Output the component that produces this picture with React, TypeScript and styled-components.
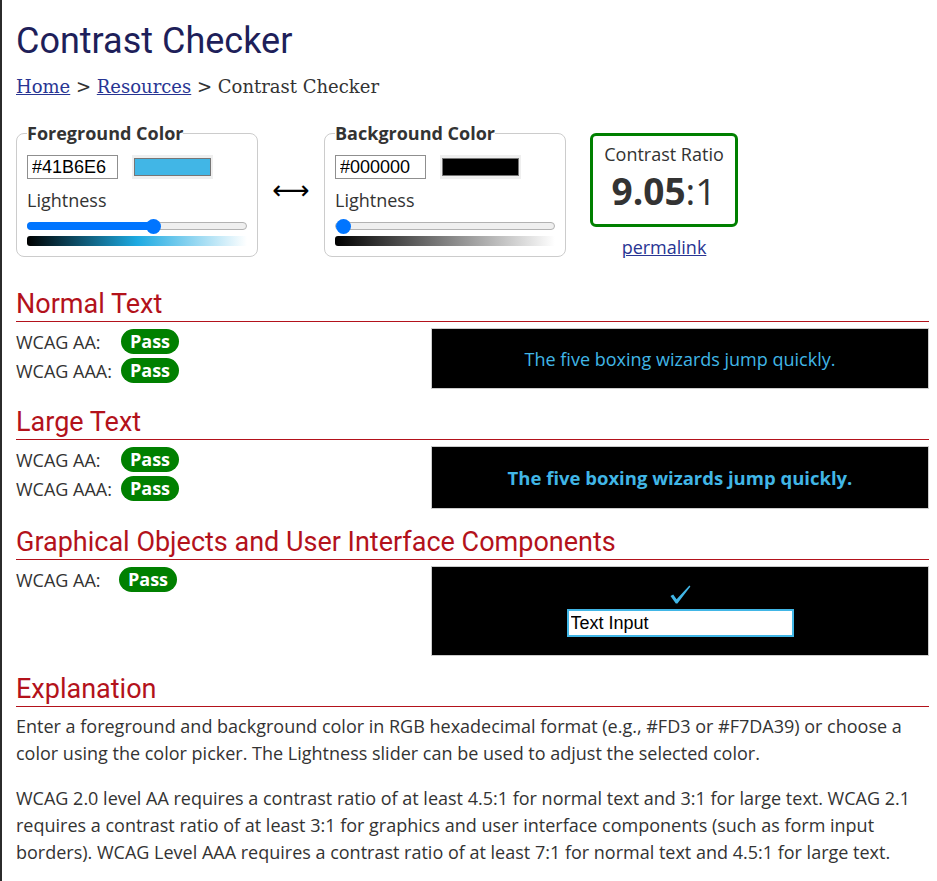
import styled, { createGlobalStyle } from "styled-components";

const GlobalStyle = createGlobalStyle`
  html {
    border-left: 2px solid #2b2b2b;
  }

  body {
    margin: 0;
    background: #fff;
    color: #333;
    font-family: "Open Sans", sans-serif;
    font-size: 18px;
  }
`;

const Page = styled.main`
  padding: 0 8px 40px 14px;
`;

const Title = styled.h1`
  margin: 20px 0 0;
  font-family: Roboto, sans-serif;
  font-weight: 400;
  font-size: 36px;
  line-height: 43px;
  color: #1e1f5a;
`;

const Crumbs = styled.nav`
  margin-top: 13px;
  font-family: "DejaVu Serif", serif;
  font-size: 18px;
  color: #333;

  a {
    color: #283593;
    text-decoration: underline;
  }
`;

const Controls = styled.div`
  display: flex;
  align-items: flex-start;
  margin-top: 24px;
  margin-bottom: 28px;
`;

const ColorSet = styled.fieldset`
  box-sizing: border-box;
  width: 242px;
  min-width: 0;
  margin: 0;
  padding: 10px;
  border: 1px solid #ccc;
  border-radius: 8px;

  legend {
    padding: 0;
    font-weight: 700;
    font-size: 18px;
    line-height: 24px;
    color: #333;
  }
`;

const InputRow = styled.div`
  display: flex;
  gap: 14px;
`;

const HexInput = styled.input`
  box-sizing: border-box;
  width: 91px;
  height: 24px;
  margin: 0;
  padding: 0 4px;
  border: 1px solid #8f8f8f;
  font-family: "Liberation Sans", Arial, sans-serif;
  font-size: 18px;
  color: #000;
`;

const Swatch = styled.div<{ $color: string }>`
  box-sizing: border-box;
  width: 81px;
  height: 24px;
  padding: 3px 2px;
  background: #efefef;

  span {
    display: block;
    height: 100%;
    box-sizing: border-box;
    border: 1px solid #767676;
    background: ${(p) => p.$color};
  }
`;

const Label = styled.div`
  margin-top: 9px;
  font-size: 18px;
  line-height: 24px;
`;

const Track = styled.div`
  position: relative;
  box-sizing: border-box;
  height: 8px;
  margin: 10px 0 6px;
  border: 1px solid #b2b2b2;
  border-radius: 4px;
  background: #efefef;
`;

const Fill = styled.div`
  position: absolute;
  top: -1px;
  bottom: -1px;
  left: -1px;
  border-radius: 4px;
  background: #0075ff;
`;

const Thumb = styled.div`
  position: absolute;
  top: 50%;
  width: 15px;
  height: 15px;
  margin: -7.5px 0 0 -7.5px;
  border-radius: 50%;
  background: #0075ff;
`;

const Gradient = styled.div<{ $mid: string }>`
  height: 10px;
  border-radius: 3px 0 0 3px;
  background: linear-gradient(to right, #000, ${(p) => p.$mid}, #fff);
`;

const Arrow = styled.div`
  width: 66px;
  align-self: center;
  text-align: center;
  font-family: "DejaVu Sans", sans-serif;
  font-size: 26px;
  color: #000;
`;

const RatioCol = styled.div`
  display: flex;
  flex-direction: column;
  align-items: center;
  margin: 12px 0 0 24px;

  a {
    margin-top: 8px;
    font-size: 18px;
    line-height: 24px;
    color: #283593;
  }
`;

const RatioBox = styled.div`
  box-sizing: border-box;
  width: 148px;
  height: 94px;
  padding: 7px 0;
  border: 3px solid #008000;
  border-radius: 6px;
  text-align: center;
  font-size: 18px;
  line-height: 23px;

  strong {
    display: block;
    font-size: 37px;
    line-height: 50px;
    font-weight: 700;
  }

  strong span {
    font-weight: 400;
  }
`;

const Heading = styled.h2`
  margin: 16px 0 0;
  border-bottom: 1px solid #b3121b;
  font-family: Roboto, sans-serif;
  font-weight: 400;
  font-size: 27px;
  line-height: 34px;
  color: #b3121b;
`;

const SectionBody = styled.div`
  display: grid;
  grid-template-columns: 415px 1fr;
  padding-top: 6px;
`;

const Results = styled.div<{ $labelWidth: number }>`
  display: grid;
  grid-template-columns: ${(p) => p.$labelWidth}px auto;
  justify-content: start;
  align-items: center;
  row-gap: 4px;
  padding-top: 1px;
  align-self: start;
  font-size: 18px;
  line-height: 24px;
`;

const Pill = styled.span`
  display: inline-block;
  box-sizing: border-box;
  height: 25px;
  padding: 0 9px;
  border-radius: 13px;
  background: #008000;
  color: #fff;
  font-weight: 700;
  font-size: 18px;
  line-height: 25px;
  vertical-align: top;
`;

const Sample = styled.div<{ $height: number; $bold?: boolean }>`
  box-sizing: border-box;
  height: ${(p) => p.$height}px;
  display: flex;
  flex-direction: column;
  align-items: center;
  justify-content: center;
  gap: 4px;
  border: 1px solid #ccc;
  background: #000;
  color: #41b6e6;
  font-size: ${(p) => (p.$bold ? 18.5 : 18)}px;
  font-weight: ${(p) => (p.$bold ? 700 : 400)};
`;

const DemoInput = styled.input`
  box-sizing: border-box;
  width: 227px;
  height: 28px;
  margin: 0;
  padding: 0 2px;
  border: 2px solid #41b6e6;
  background: #fff;
  font-family: "Liberation Sans", Arial, sans-serif;
  font-size: 18px;
  color: #000;
  outline: none;
`;

const Para = styled.p`
  margin: 6px 0 18px;
  font-size: 18px;
  line-height: 27px;
  color: #333;

  & + & {
    margin-top: 0;
  }
`;

interface SliderProps {
  value: number;
}

const Slider = ({ value }: SliderProps) => {
  const pos = `calc(7.5px + (100% - 15px) * ${value})`;
  return (
    <Track>
      <Fill style={{ width: value > 0 ? pos : 0 }} />
      <Thumb style={{ left: pos }} />
    </Track>
  );
};

interface ColorFieldProps {
  legend: string;
  hex: string;
  lightness: number;
  mid: string;
}

const ColorField = ({ legend, hex, lightness, mid }: ColorFieldProps) => (
  <ColorSet>
    <legend>{legend}</legend>
    <InputRow>
      <HexInput defaultValue={hex} />
      <Swatch $color={hex}>
        <span />
      </Swatch>
    </InputRow>
    <Label>Lightness</Label>
    <Slider value={lightness} />
    <Gradient $mid={mid} />
  </ColorSet>
);

const Result = ({ label }: { label: string }) => (
  <>
    <span>{label}</span>
    <span>
      <Pill>Pass</Pill>
    </span>
  </>
);

const CheckIcon = () => (
  <svg width="21" height="20" viewBox="0 0 21 20" aria-hidden="true">
    <path d="M0.5 11 L3.2 9.6 L6.6 14.2 L19.4 0.6 L20.4 1.4 L7.4 18.6 L5.8 18.6 Z" fill="#41b6e6" />
  </svg>
);

const SAMPLE = "The five boxing wizards jump quickly.";

export default function App() {
  return (
    <>
      <GlobalStyle />
      <Page>
        <Title>Contrast Checker</Title>
        <Crumbs>
          <a href="#">Home</a> &gt; <a href="#">Resources</a> &gt; Contrast Checker
        </Crumbs>

        <Controls>
          <ColorField legend="Foreground Color" hex="#41B6E6" lightness={0.58} mid="hsl(197, 77%, 50%)" />
          <Arrow>⟷</Arrow>
          <ColorField legend="Background Color" hex="#000000" lightness={0} mid="#808080" />
          <RatioCol>
            <RatioBox>
              Contrast Ratio
              <strong>
                9.05<span>:1</span>
              </strong>
            </RatioBox>
            <a href="#">permalink</a>
          </RatioCol>
        </Controls>

        <Heading>Normal Text</Heading>
        <SectionBody>
          <Results $labelWidth={105}>
            <Result label="WCAG AA:" />
            <Result label="WCAG AAA:" />
          </Results>
          <Sample $height={61}>{SAMPLE}</Sample>
        </SectionBody>

        <Heading>Large Text</Heading>
        <SectionBody>
          <Results $labelWidth={105}>
            <Result label="WCAG AA:" />
            <Result label="WCAG AAA:" />
          </Results>
          <Sample $height={63} $bold>
            {SAMPLE}
          </Sample>
        </SectionBody>

        <Heading>Graphical Objects and User Interface Components</Heading>
        <SectionBody>
          <Results $labelWidth={103}>
            <Result label="WCAG AA:" />
          </Results>
          <Sample $height={90}>
            <CheckIcon />
            <DemoInput defaultValue="Text Input" readOnly />
          </Sample>
        </SectionBody>

        <Heading>Explanation</Heading>
        <Para>
          Enter a foreground and background color in RGB hexadecimal format (e.g., #FD3 or #F7DA39) or
          choose a color using the color picker. The Lightness slider can be used to adjust the selected
          color.
        </Para>
        <Para>
          WCAG 2.0 level AA requires a contrast ratio of at least 4.5:1 for normal text and 3:1 for large
          text. WCAG 2.1 requires a contrast ratio of at least 3:1 for graphics and user interface
          components (such as form input borders). WCAG Level AAA requires a contrast ratio of at least
          7:1 for normal text and 4.5:1 for large text.
        </Para>
      </Page>
    </>
  );
}
